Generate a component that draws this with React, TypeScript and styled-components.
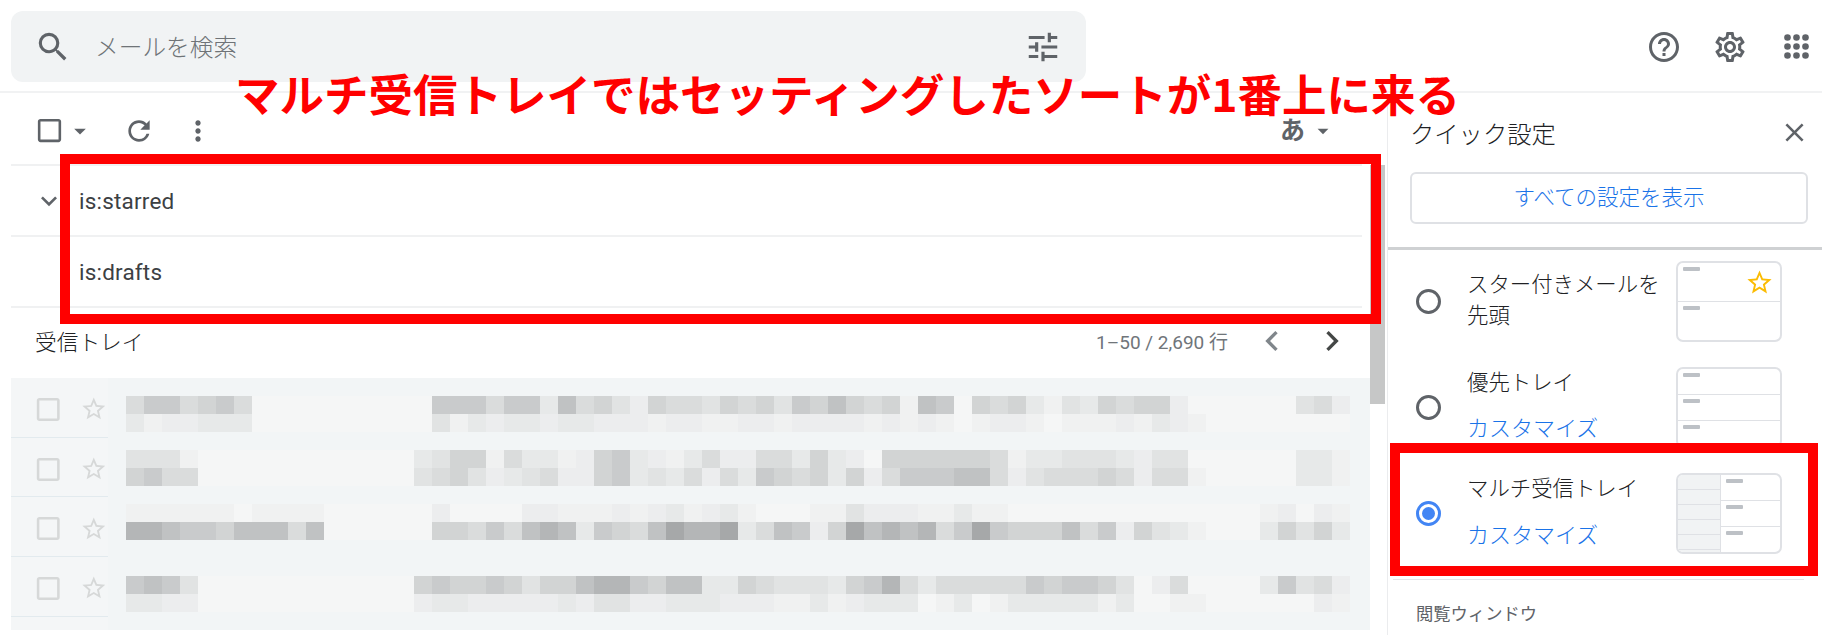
import React from 'react';
import styled, { createGlobalStyle } from 'styled-components';
import {
  MdSearch,
  MdTune,
  MdHelpOutline,
  MdOutlineSettings,
  MdCheckBoxOutlineBlank,
  MdArrowDropDown,
  MdRefresh,
  MdMoreVert,
  MdExpandMore,
  MdChevronLeft,
  MdChevronRight,
  MdClose,
  MdStarBorder,
} from 'react-icons/md';

const SANS = `Roboto, "Noto Sans CJK JP", sans-serif`;

// tone of each pixelated block, 0 is darkest and . is empty
const TONES: Record<string, string> = {
  '0': '#a6a8a9',
  '1': '#b4b6b7',
  '2': '#c0c2c3',
  '3': '#c9cbcc',
  '4': '#d2d4d4',
  '5': '#dadcdc',
  '6': '#e1e3e3',
  '7': '#e7e9e9',
  '8': '#ecedee',
  '9': '#f0f1f1',
  '.': '#f5f6f6',
};

const MAIL_ROWS = [
  {
    gap: 18,
    lines: [
      '5335435 .......... 3335337 2546 8455 6454 6342 4549 23.4 54796745448 ...... 658',
      '7988777 .......... 6978778 7788 8988 9988 9888 8989 89.9 889.9998978 9..... ...',
    ],
  },
  {
    gap: 18,
    lines: [
      '6669... .........7 6449577 9843 7897 5885 5747 8.44 4444 59776667866 ...... 779',
      '4355... .........6 5468765 8843 7675 8573 4547 4853 3322 58655545855 9..... 779',
    ],
  },
  {
    gap: 18,
    lines: [
      '999999. 9999...... 8....88 9998 9879 879. ..99 6888 9979 9.......... ....98 .89',
      '1123342 2252...... 4453521 2734 5201 1075 2384 0212 1530 34442538467 9...74 647',
    ],
  },
  {
    gap: 36,
    lines: [
      '3236... .........4 3443464 4211 3422 7745 6667 4315 7555 55343346.85 ....73 658',
      '7788... .........8 7788888 7866 8877 7888 9979 8777 .97. 97777797..9 9..... .89',
    ],
  },
];

const AppsIcon = () => (
  <svg width="25" height="25" viewBox="0 0 25 25" fill="#5f6368">
    {[3.5, 12.5, 21.5].map((y) =>
      [3.5, 12.5, 21.5].map((x) => <circle key={`${x}-${y}`} cx={x} cy={y} r="3.3" />),
    )}
  </svg>
);

const App = () => {
  return (
    <Page>
      <GlobalStyle />
      <TopBar>
        <SearchBar>
          <SearchIcon>
            <MdSearch size={38} />
          </SearchIcon>
          <Placeholder>メールを検索</Placeholder>
          <TuneIcon>
            <MdTune size={38} />
          </TuneIcon>
        </SearchBar>
        <TopActions>
          <TopAction>
            <MdHelpOutline size={36} />
          </TopAction>
          <TopAction>
            <MdOutlineSettings size={36} />
          </TopAction>
          <TopAction>
            <AppsIcon />
          </TopAction>
        </TopActions>
      </TopBar>

      <Body>
        <Main>
          <Toolbar>
            <ToolLeft>
              <ToolIcon $width={31}>
                <MdCheckBoxOutlineBlank size={31} />
              </ToolIcon>
              <ToolIcon $width={28} $margin="0 0 0 1px">
                <MdArrowDropDown size={28} />
              </ToolIcon>
              <ToolIcon $width={32} $margin="0 0 0 29px">
                <MdRefresh size={32} />
              </ToolIcon>
              <ToolIcon $width={32} $margin="0 0 0 27px">
                <MdMoreVert size={32} />
              </ToolIcon>
            </ToolLeft>
            <InputTool>
              <InputGlyph>あ</InputGlyph>
              <ToolIcon $width={26} $margin="0 0 0 5px">
                <MdArrowDropDown size={28} />
              </ToolIcon>
            </InputTool>
          </Toolbar>

          <ListWrap>
            <List>
              <SectionRow>
                <ChevronSlot>
                  <MdExpandMore size={32} />
                </ChevronSlot>
                <SectionLabel>is:starred</SectionLabel>
              </SectionRow>
              <SectionRow>
                <ChevronSlot />
                <SectionLabel>is:drafts</SectionLabel>
              </SectionRow>

              <InboxHead>
                <InboxTitle>受信トレイ</InboxTitle>
                <Pager>
                  <PagerText>1–50 / 2,690 行</PagerText>
                  <PagerButton $dim>
                    <MdChevronLeft size={40} />
                  </PagerButton>
                  <PagerButton>
                    <MdChevronRight size={40} />
                  </PagerButton>
                </Pager>
              </InboxHead>

              <MailArea>
                <MailControls>
                  {MAIL_ROWS.map((row) => (
                    <MailControl key={row.lines[0]}>
                      <MdCheckBoxOutlineBlank size={31} />
                      <MdStarBorder size={28} />
                    </MailControl>
                  ))}
                </MailControls>
                <Mosaic>
                  {MAIL_ROWS.map((row) => (
                    <MosaicRow key={row.lines[0]} $gap={row.gap}>
                      {row.lines.map((line) => (
                        <MosaicLine key={line}>
                          {line
                            .replace(/ /g, '')
                            .split('')
                            .map((tone, i) => (
                              <Block key={i} $tone={tone} />
                            ))}
                        </MosaicLine>
                      ))}
                    </MosaicRow>
                  ))}
                </Mosaic>
              </MailArea>
            </List>
            <ScrollTrack>
              <ScrollThumb />
            </ScrollTrack>
          </ListWrap>
        </Main>

        <Panel>
          <PanelHead>
            <PanelTitle>クイック設定</PanelTitle>
            <CloseButton>
              <MdClose size={31} />
            </CloseButton>
          </PanelHead>
          <AllSettings>すべての設定を表示</AllSettings>
          <PanelRule />

          <Option>
            <Radio />
            <OptionText>
              <OptionLabel>
                スター付きメールを
                <br />
                先頭
              </OptionLabel>
            </OptionText>
            <Thumb>
              <ThumbColumn>
                <ThumbRow>
                  <ThumbBar />
                  <ThumbStar>
                    <MdStarBorder size={29} />
                  </ThumbStar>
                </ThumbRow>
                <ThumbRow>
                  <ThumbBar />
                </ThumbRow>
              </ThumbColumn>
            </Thumb>
          </Option>

          <Option>
            <Radio />
            <OptionText $gap={15}>
              <OptionLabel>優先トレイ</OptionLabel>
              <Customize>カスタマイズ</Customize>
            </OptionText>
            <Thumb>
              <ThumbColumn>
                <ThumbRow>
                  <ThumbBar />
                </ThumbRow>
                <ThumbRow>
                  <ThumbBar />
                </ThumbRow>
                <ThumbRow>
                  <ThumbBar />
                </ThumbRow>
              </ThumbColumn>
            </Thumb>
          </Option>

          <Option>
            <Radio $checked />
            <OptionText $gap={16}>
              <OptionLabel>マルチ受信トレイ</OptionLabel>
              <Customize>カスタマイズ</Customize>
            </OptionText>
            <Thumb>
              <ThumbSide>
                {[0, 1, 2, 3, 4, 5].map((n) => (
                  <ThumbSideRow key={n} />
                ))}
              </ThumbSide>
              <ThumbColumn>
                <ThumbRow>
                  <ThumbBar />
                </ThumbRow>
                <ThumbRow>
                  <ThumbBar />
                </ThumbRow>
                <ThumbRow>
                  <ThumbBar />
                </ThumbRow>
              </ThumbColumn>
            </Thumb>
          </Option>

          <PanelDivider />
          <SectionCaption>閲覧ウィンドウ</SectionCaption>
        </Panel>
      </Body>

      <Annotation>マルチ受信トレイではセッティングしたソートが1番上に来る</Annotation>
      <RedFrame $x={60} $y={154} $w={1321} $h={170} />
      <RedFrame $x={1390} $y={443} $w={428} $h={133} />
    </Page>
  );
};

export default App;

const GlobalStyle = createGlobalStyle`
  html, body {
    margin: 0;
    padding: 0;
    background: #fff;
  }
  * {
    box-sizing: border-box;
  }
`;

const Page = styled.div`
  position: relative;
  width: 1822px;
  height: 635px;
  overflow: hidden;
  background: #fff;
  font-family: ${SANS};
  color: #3c4043;
`;

const TopBar = styled.header`
  height: 93px;
  display: flex;
  align-items: flex-start;
  justify-content: space-between;
  padding: 11px 6px 0 11px;
  border-bottom: 2px solid #f1f2f3;
`;

const SearchBar = styled.div`
  width: 1075px;
  height: 71px;
  display: flex;
  align-items: center;
  padding: 0 11px 0 23px;
  background: #f1f3f4;
  border-radius: 12px;
`;

const SearchIcon = styled.div`
  display: flex;
  color: #5f6368;
`;

const Placeholder = styled.div`
  flex: 1;
  margin-left: 23px;
  margin-top: -2px;
  font-size: 23.7px;
  font-weight: 300;
  color: #6f7377;
`;

const TuneIcon = styled.div`
  display: flex;
  margin-right: 13px;
  color: #5f6368;
`;

const TopActions = styled.div`
  display: flex;
  align-items: center;
  gap: 26px;
  height: 71px;
`;

const TopAction = styled.div`
  width: 40px;
  display: flex;
  justify-content: center;
  color: #5f6368;
`;

const Body = styled.div`
  display: flex;
  height: 542px;
`;

const Main = styled.main`
  width: 1387px;
  flex-shrink: 0;
`;

const Toolbar = styled.div`
  height: 71px;
  display: flex;
  align-items: center;
  justify-content: space-between;
  padding: 4px 25px 0 34px;
`;

const ToolLeft = styled.div`
  display: flex;
  align-items: center;
`;

const ToolIcon = styled.div<{ $width: number; $margin?: string }>`
  width: ${(p) => p.$width}px;
  margin: ${(p) => p.$margin || '0'};
  display: flex;
  justify-content: center;
  color: #5f6368;
`;

const InputTool = styled.div`
  display: flex;
  align-items: center;
  margin-right: 26px;
`;

const InputGlyph = styled.div`
  font-size: 25px;
  font-weight: 700;
  color: #5f6368;
  line-height: 1;
`;

const ListWrap = styled.div`
  display: flex;
  padding-left: 11px;
`;

const List = styled.div`
  width: 1359px;
`;

const SectionRow = styled.div`
  height: 71px;
  width: 1351px;
  display: flex;
  align-items: center;
  border-top: 2px solid #f0f1f2;
`;

const ChevronSlot = styled.div`
  width: 68px;
  padding-left: 22px;
  display: flex;
  color: #5f6368;
`;

const SectionLabel = styled.div`
  font-size: 22.5px;
  letter-spacing: 0.2px;
  color: #3c4043;
`;

const InboxHead = styled.div`
  height: 72px;
  width: 1351px;
  display: flex;
  align-items: center;
  justify-content: space-between;
  padding: 0 0 5px 24px;
  border-top: 2px solid #f0f1f2;
`;

const InboxTitle = styled.div`
  font-size: 21.7px;
  font-weight: 300;
  color: #202124;
`;

const Pager = styled.div`
  display: flex;
  align-items: center;
`;

const PagerText = styled.div`
  font-size: 19px;
  color: #70757a;
  margin-right: 14px;
`;

const PagerButton = styled.div<{ $dim?: boolean }>`
  width: 60px;
  display: flex;
  justify-content: center;
  color: ${(p) => (p.$dim ? '#80868b' : '#444746')};
`;

const MailArea = styled.div`
  height: 252px;
  display: flex;
  background: #f2f5f6;
`;

const MailControls = styled.div`
  width: 97px;
  flex-shrink: 0;
  background: #f4f6f7;
`;

const MailControl = styled.div`
  height: 59.7px;
  display: flex;
  align-items: center;
  padding: 4px 0 0 22px;
  gap: 17px;
  border-bottom: 1px solid #e2eaee;
  color: #d6d8d8;
`;

const Mosaic = styled.div`
  padding-left: 18px;
`;

const MosaicRow = styled.div<{ $gap: number }>`
  padding-top: ${(p) => p.$gap}px;
`;

const MosaicLine = styled.div`
  display: flex;
`;

const Block = styled.div<{ $tone: string }>`
  width: 18px;
  height: 18px;
  flex-shrink: 0;
  background: ${(p) => TONES[p.$tone]};
`;

const ScrollTrack = styled.div`
  width: 17px;
  padding: 1px 2px 0 0;
`;

const ScrollThumb = styled.div`
  width: 15px;
  height: 239px;
  background: #c6c7c7;
`;

const Panel = styled.aside`
  flex: 1;
  border-left: 1px solid #ebecee;
  display: flex;
  flex-direction: column;
`;

const PanelHead = styled.div`
  height: 79px;
  display: flex;
  align-items: center;
  justify-content: space-between;
  padding: 0 12px 0 22px;
`;

const PanelTitle = styled.div`
  font-size: 24.3px;
  font-weight: 300;
  color: #202124;
`;

const CloseButton = styled.div`
  display: flex;
  color: #5f6368;
`;

const AllSettings = styled.div`
  width: 398px;
  height: 52px;
  margin-left: 22px;
  padding-bottom: 6px;
  display: flex;
  align-items: center;
  justify-content: center;
  border: 2px solid #dfe1e5;
  border-radius: 6px;
  font-size: 21.5px;
  font-weight: 300;
  color: #1a73e8;
`;

const PanelRule = styled.div`
  height: 3px;
  margin-top: 23px;
  margin-bottom: 11px;
  background: #cfd1d3;
`;

const Option = styled.div`
  height: 81px;
  margin-bottom: 25px;
  display: flex;
  align-items: center;
  padding-left: 28px;
`;

const Radio = styled.div<{ $checked?: boolean }>`
  position: relative;
  width: 25px;
  height: 25px;
  flex-shrink: 0;
  border-radius: 50%;
  border: 3px solid ${(p) => (p.$checked ? '#4285f4' : '#5f6368')};
  display: flex;
  align-items: center;
  justify-content: center;
  &::after {
    content: '';
    display: ${(p) => (p.$checked ? 'block' : 'none')};
    width: 13px;
    height: 13px;
    border-radius: 50%;
    background: #4285f4;
  }
`;

const OptionText = styled.div<{ $gap?: number }>`
  width: 209px;
  margin: -4px 0 0 26px;
  display: flex;
  flex-direction: column;
  gap: ${(p) => p.$gap || 0}px;
`;

const OptionLabel = styled.div`
  font-size: 21.4px;
  font-weight: 300;
  line-height: 31px;
  color: #202124;
  white-space: nowrap;
`;

const Customize = styled.div`
  font-size: 22px;
  font-weight: 300;
  line-height: 31px;
  color: #1a73e8;
`;

const Thumb = styled.div`
  width: 106px;
  height: 81px;
  flex-shrink: 0;
  display: flex;
  overflow: hidden;
  border: 2px solid #dfe1e5;
  border-radius: 7px;
`;

const ThumbColumn = styled.div`
  flex: 1;
  display: flex;
  flex-direction: column;
`;

const ThumbRow = styled.div`
  position: relative;
  flex: 1;
  padding: 4px 0 0 5px;
  border-bottom: 1px solid #dfe1e5;
  &:last-child {
    border-bottom: 0;
  }
`;

const ThumbBar = styled.div`
  width: 17px;
  height: 4px;
  border-radius: 1px;
  background: #bdc1c6;
`;

const ThumbStar = styled.div`
  position: absolute;
  top: 5px;
  right: 6px;
  display: flex;
  color: #fbbc04;
`;

const ThumbSide = styled.div`
  width: 43px;
  display: flex;
  flex-direction: column;
  background: #f1f3f4;
  border-right: 1px solid #dfe1e5;
`;

const ThumbSideRow = styled.div`
  height: 15px;
  flex-shrink: 0;
  border-bottom: 1px solid #dfe1e5;
`;

const PanelDivider = styled.div`
  width: 411px;
  height: 1px;
  margin: 0 0 0 5px;
  background: #e4e6e8;
`;

const SectionCaption = styled.div`
  margin: 20px 0 0 28px;
  font-size: 17.3px;
  color: #5f6368;
`;

const Annotation = styled.div`
  position: absolute;
  left: 235px;
  top: 68px;
  font-family: "Noto Sans CJK JP", sans-serif;
  font-size: 44.5px;
  font-weight: 700;
  line-height: 50px;
  color: #ff0000;
  white-space: nowrap;
`;

const RedFrame = styled.div<{ $x: number; $y: number; $w: number; $h: number }>`
  position: absolute;
  left: ${(p) => p.$x}px;
  top: ${(p) => p.$y}px;
  width: ${(p) => p.$w}px;
  height: ${(p) => p.$h}px;
  border: 10px solid #ff0000;
`;
